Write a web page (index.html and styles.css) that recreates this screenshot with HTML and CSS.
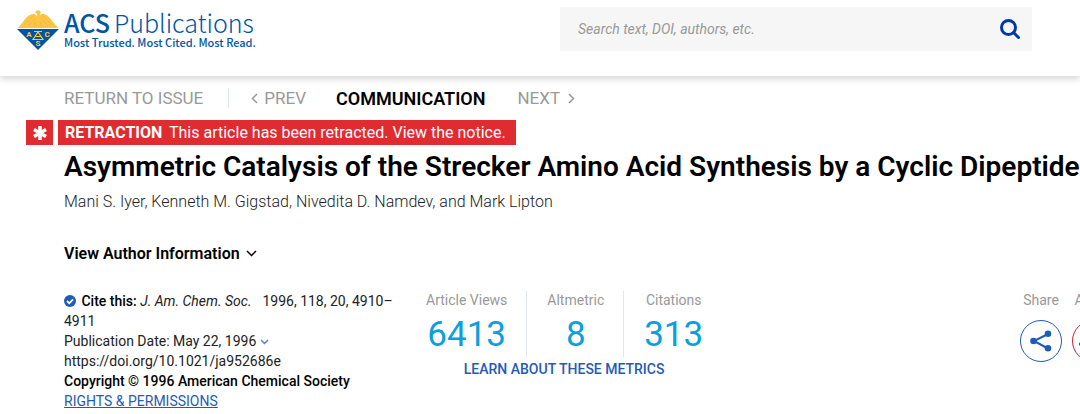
FILE: index.html
```html
<!DOCTYPE html>
<html lang="en">
<head>
    <meta charset="UTF-8">
    <meta name="viewport" content="width=device-width, initial-scale=1.0">
    <title>Asymmetric Catalysis of the Strecker Amino Acid Synthesis by a Cyclic Dipeptide</title>
    <link rel="stylesheet" href="styles.css">
</head>
<body>
    <header class="header">
        <a class="logo" href="#">
            <svg class="logo-mark" width="42" height="40" viewBox="0 0 42 40" aria-hidden="true">
                <path fill="#fbc545" d="M1 18L9 8c2-2.500 5-4.500 9-4l2 2c.5-1.600.2-2.800-1.800-3C18.500 1 20 0 21.600.3c1.900.4 2.500 2 1.600 4.700l2-1.200c3.500.3 6 2.200 8 4.700l8 9.500z"/>
                <path fill="none" stroke="#f0b540" stroke-width=".7" d="M16 6L7 15M18 8l-7 8M19 11l-2 6M26 6l9 9M24 8l7 8M23 11l2 6"/>
                <path fill="#0054a6" d="M0 19h42L21 40z"/>
                <path fill="none" stroke="#fdc82f" stroke-width="1.200" d="M17 21.500h8M21 22l-5 7.500h10L21 22M18.500 26.500h5"/>
                <g class="logo-letters">
                    <text x="12" y="27">A</text>
                    <text x="30" y="27">C</text>
                    <text x="21" y="36">S</text>
                </g>
            </svg>
            <span class="logo-text">
                <span class="logo-name"><b>ACS</b><span>Publications</span></span>
                <span class="logo-tagline">Most Trusted. Most Cited. Most Read.</span>
            </span>
        </a>
        <form class="search">
            <input type="search" class="search-input" aria-label="Search" placeholder="Search text, DOI, authors, etc.">
            <button type="button" class="search-btn" aria-label="Submit search">
                <svg width="20" height="20" viewBox="0 0 20 20" fill="none" stroke="#0039a6" stroke-width="3" stroke-linecap="round">
                    <circle cx="8.500" cy="8.500" r="7"/>
                    <path d="M13.800 13.800l4.700 4.700"/>
                </svg>
            </button>
        </form>
    </header>

    <main class="article">
        <nav class="issue-nav">
            <a class="return" href="#">RETURN TO ISSUE</a>
            <a class="prev" href="#"><svg width="7" height="11" viewBox="0 0 7 11"><path d="M6 1L1.500 5.500 6 10"/></svg>PREV</a>
            <span class="current">COMMUNICATION</span>
            <a class="next" href="#">NEXT<svg width="7" height="11" viewBox="0 0 7 11"><path d="M1 1l4.500 4.500L1 10"/></svg></a>
        </nav>

        <div class="retraction">
            <span class="retraction-icon">
                <svg width="14" height="14" viewBox="0 0 14 14" stroke="#fff" stroke-width="3.500"><path d="M7 0v14M1 3.500l12 7M13 3.500l-12 7"/></svg>
            </span>
            <a class="retraction-text" href="#"><b>RETRACTION</b> This article has been retracted. View the notice.</a>
        </div>

        <h1 class="title">Asymmetric Catalysis of the Strecker Amino Acid Synthesis by a Cyclic Dipeptide</h1>
        <p class="authors">Mani S. Iyer, Kenneth M. Gigstad, Nivedita D. Namdev, and Mark Lipton</p>
        <button type="button" class="author-info">View Author Information
            <svg width="11" height="7" viewBox="0 0 11 7"><path d="M1 1l4.500 4.500L10 1"/></svg>
        </button>

        <div class="details">
            <div class="citation">
                <div>
                    <svg class="check" width="12" height="12" viewBox="0 0 12 12"><circle cx="6" cy="6" r="6" fill="#1f5cb4"/><path d="M3 6l2.300 2.300L9 4.300" fill="none" stroke="#fff" stroke-width="1.800"/></svg>
                    <b>Cite this:</b> <i>J. Am. Chem. Soc.</i> &nbsp;1996, 118, 20, 4910–4911
                </div>
                <div>Publication Date: May 22, 1996 <svg class="date-arrow" width="9" height="6" viewBox="0 0 9 6"><path d="M1 1l3.500 3.500L8 1"/></svg></div>
                <div>https://doi.org/10.1021/ja952686e</div>
                <div><b>Copyright © 1996 American Chemical Society</b></div>
                <a class="rights" href="#">RIGHTS &amp; PERMISSIONS</a>
            </div>

            <div class="metrics">
                <div class="metric-list">
                    <div class="metric">Article Views<span class="value">6413</span></div>
                    <div class="metric">Altmetric<span class="value">8</span></div>
                    <div class="metric">Citations<span class="value">313</span></div>
                </div>
                <a class="learn" href="#">LEARN ABOUT THESE METRICS</a>
            </div>

            <div class="actions">
                <button type="button" class="action">Share
                    <span class="circle">
                        <svg width="22" height="22" viewBox="0 0 22 22" fill="#1f5cb4"><path d="M18 4L4 11l14 7.500" fill="none" stroke="#1f5cb4" stroke-width="2"/><circle cx="18" cy="3.800" r="3.300"/><circle cx="3.500" cy="11" r="3.300"/><circle cx="18" cy="18.300" r="3.300"/></svg>
                    </span>
                </button>
                <button type="button" class="action">Alerts
                    <span class="circle red">
                        <svg width="28" height="22" viewBox="0 0 28 22" fill="#a3161c"><circle cx="2" cy="14" r="2"/><path d="M6 17c3-3 1-12 8-12s5 9 8 12z"/></svg>
                    </span>
                </button>
            </div>
        </div>
    </main>
</body>
</html>
```

FILE: styles.css
```css
* {
    box-sizing: border-box;
}
body {
    margin: 0;
    font-family: Roboto, Arial, sans-serif;
    font-size: 14px;
    color: #222;
    background: #fff;
    overflow-x: hidden;
}
a {
    color: inherit;
    text-decoration: none;
}
button {
    padding: 0;
    border: 0;
    background: none;
    font: inherit;
    color: inherit;
    cursor: pointer;
}
.header {
    display: flex;
    justify-content: space-between;
    align-items: flex-start;
    height: 76px;
    padding: 7px 48px 0 17px;
    box-shadow: 0 2px 8px rgba(0,0,0,0.2);
}
.logo {
    display: flex;
    gap: 5px;
    padding-top: 3px;
    color: #0054a6;
}
.logo-letters {
    fill: #fdc82f;
    font-size: 8px;
    font-weight: 700;
    text-anchor: middle;
}
.logo-text {
    display: flex;
    flex-direction: column;
    font-family: "Noto Sans CJK SC", sans-serif;
    white-space: nowrap;
}
.logo-name {
    display: flex;
    gap: 4px;
    font-size: 25px;
    line-height: 24px;
}
.logo-name b {
    font-weight: 500;
}
.logo-name span {
    font-weight: 300;
}
.logo-tagline {
    font-size: 11px;
    font-weight: 500;
    line-height: 16px;
}
.search {
    display: flex;
    width: 472px;
    height: 44px;
    padding: 0 12px 0 18px;
    background: #f6f6f6;
}
.search-input {
    flex: 1;
    padding: 0;
    border: 0;
    outline: 0;
    background: none;
    font: italic 14px Roboto, Arial, sans-serif;
}
.search-input::placeholder {
    color: #999;
}
.search-btn svg {
    display: block;
}
.article {
    padding: 11px 0 0 64px;
    overflow: hidden;
}
.issue-nav {
    display: flex;
    align-items: center;
    height: 22px;
    font-size: 17px;
    color: #999;
}
.issue-nav svg, .author-info svg, .date-arrow {
    fill: none;
    stroke: currentColor;
    stroke-width: 1.5;
}
.return {
    padding-right: 25px;
    border-right: 1px solid #e0e6e8;
}
.prev {
    padding-left: 22px;
}
.prev svg {
    margin-right: 6px;
}
.current {
    padding: 0 32px 0 30px;
    font-size: 18px;
    font-weight: 600;
    color: #000;
}
.next svg {
    margin-left: 8px;
}
.retraction {
    display: flex;
    gap: 5px;
    margin: 11px 0 0 -38px;
    font-size: 16px;
    line-height: 25px;
    color: #fff;
}
.retraction-icon {
    display: flex;
    align-items: center;
    justify-content: center;
    width: 27px;
    background: #e02b30;
}
.retraction-text {
    padding: 0 10px 0 7px;
    background: #e02b30;
}
.retraction-text b {
    margin-right: 3px;
}
.title {
    margin: 4px 0 0;
    font-size: 28px;
    font-weight: 600;
    line-height: 36px;
    color: #000;
    white-space: nowrap;
}
.authors {
    margin: 6px 0 0;
    font-size: 16px;
    font-weight: 300;
    line-height: 22px;
}
.author-info {
    display: block;
    margin-top: 31px;
    font-size: 16px;
    font-weight: 600;
    line-height: 20px;
    color: #000;
}
.author-info svg {
    margin-left: 2px;
    vertical-align: 2px;
}
.details {
    display: flex;
    align-items: flex-start;
    margin-top: 27px;
}
.citation {
    flex: 0 0 342px;
    line-height: 20px;
}
.citation b {
    font-weight: 500;
    color: #000;
}
.citation i {
    margin-right: 4px;
}
.check {
    margin-right: 2px;
    vertical-align: -1px;
}
.date-arrow {
    color: #5a83b0;
    vertical-align: 1px;
}
.rights {
    color: #1f5cb4;
    text-decoration: underline;
}
.metrics {
    text-align: center;
}
.metric-list {
    display: flex;
    color: #999;
}
.metric {
    height: 66px;
    padding: 0 19px 0 20px;
    line-height: 18px;
}
.metric + .metric {
    border-left: 1px solid #dfe5e8;
}
.value {
    display: block;
    font-size: 35px;
    line-height: 52px;
    color: #0b9fe0;
}
.learn {
    font-weight: 500;
    line-height: 24px;
    color: #1f5cb4;
}
.actions {
    display: flex;
    gap: 10px;
    margin: 0 -34px 0 auto;
}
.action {
    width: 42px;
    line-height: 18px;
    color: #999;
}
.circle {
    display: flex;
    align-items: center;
    justify-content: center;
    height: 42px;
    margin-top: 11px;
    border: 1px solid #1f5cb4;
    border-radius: 50%;
}
.circle.red {
    border-color: #c4262e;
}
```
